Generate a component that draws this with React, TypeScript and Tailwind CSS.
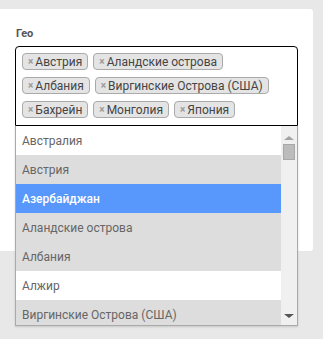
const chosen = ["Австрия", "Аландские острова", "Албания", "Виргинские Острова (США)", "Бахрейн", "Монголия", "Япония"];

const options = [
  { name: "Австралия", state: "" },
  { name: "Австрия", state: "selected" },
  { name: "Азербайджан", state: "active" },
  { name: "Аландские острова", state: "selected" },
  { name: "Албания", state: "selected" },
  { name: "Алжир", state: "" },
  { name: "Виргинские Острова (США)", state: "selected" },
];

const Tag = ({ label }: { label: string }) => (
  <li className="flex h-[17px] items-center rounded-[4px] border border-[#aaa] bg-[#e4e4e4] pl-[5px] pr-[5px] text-[12px] leading-none text-[#444]">
    <span className="mr-[2px] text-[10px] font-bold text-[#999]">×</span>
    {label}
  </li>
);

const Scrollbar = () => (
  <div className="flex w-[16px] flex-col items-center bg-[#f0f0f0]">
    <div className="mt-[10px] h-0 w-0 border-x-[5px] border-b-[4px] border-x-transparent border-b-[#a3a3a3]" />
    <div className="mt-[4px] h-[16px] w-[12px] border border-[#a8a8a8] bg-[#bcbcbc]" />
    <div className="flex-1" />
    <div className="mb-[7px] h-0 w-0 border-x-[5px] border-t-[4px] border-x-transparent border-t-[#555]" />
  </div>
);

export default function App() {
  return (
    <div className="min-h-[339px] bg-[#e8e8e8] pt-[9px] font-['Roboto',sans-serif]">
      <div className="relative h-[242px] w-[313px] rounded-r-[3px] bg-white pl-[15px] pt-[18px]">
        <label className="block pl-px text-[11px] font-bold leading-[14px] text-[#555]">Гео</label>
        <div className="relative mt-[5px] w-[283px]">
          <ul className="flex flex-wrap gap-x-[5px] gap-y-[7px] rounded-t-[4px] border border-black px-[6px] pb-[7px] pt-[6px]">
            {chosen.map((c) => (
              <Tag key={c} label={c} />
            ))}
          </ul>
          <div className="absolute left-0 top-full z-10 flex h-[200px] w-[283px] overflow-hidden border-x border-b border-[#aaa] bg-white shadow-[0_1px_2px_rgba(0,0,0,0.15)]">
            <ul className="flex-1">
              {options.map((o) => (
                <li
                  key={o.name}
                  className={
                    "flex h-[29px] items-center whitespace-nowrap px-[6px] text-[12px] " +
                    (o.state === "active"
                      ? "bg-[#5897fb] font-medium text-white"
                      : o.state === "selected"
                        ? "bg-[#ddd] text-[#666]"
                        : "bg-white text-[#666]")
                  }
                >
                  {o.name}
                </li>
              ))}
            </ul>
            <Scrollbar />
          </div>
        </div>
      </div>
    </div>
  );
}
